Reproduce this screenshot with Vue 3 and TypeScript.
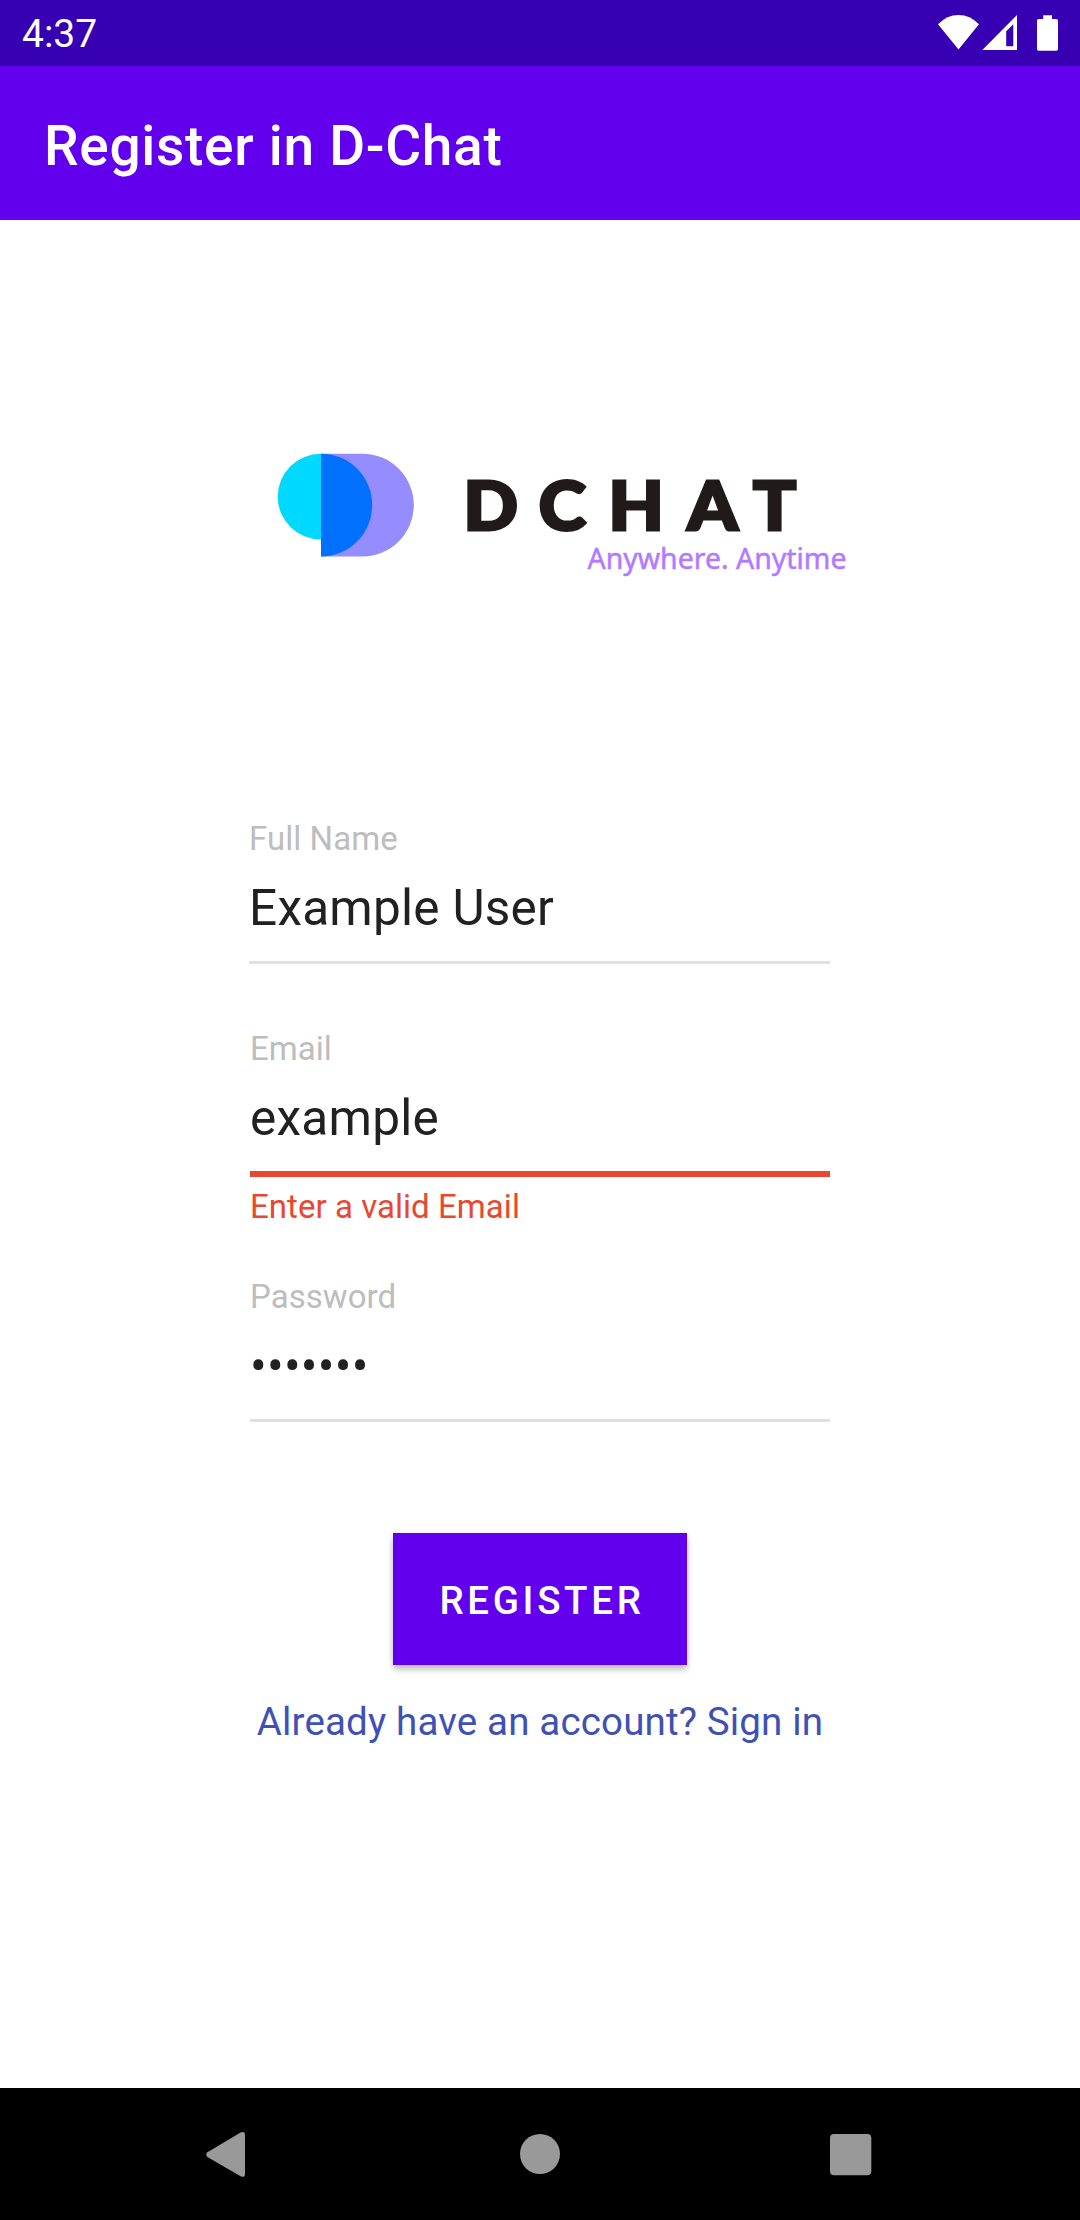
<script setup lang="ts">
import { reactive } from 'vue'

interface Field {
  id: string
  label: string
  type: string
  value: string
  error?: string
}

const fields = reactive<Field[]>([
  { id: 'name', label: 'Full Name', type: 'text', value: 'Example User' },
  { id: 'email', label: 'Email', type: 'text', value: 'example', error: 'Enter a valid Email' },
  { id: 'password', label: 'Password', type: 'password', value: 'example' },
])
</script>

<template>
  <div class="screen">
    <header class="status">
      <span class="clock">4:37</span>
      <svg class="status-icons" width="124" height="40" viewBox="936 13 124 40" fill="#fff">
        <path d="M938 24.3Q947 15 958.5 15T979 24.3L958.5 49.6Z" />
        <path fill-rule="evenodd" d="M982.3 50L1017 15V50ZM1006.2 31.3V46.2H1013.3V24.2Z" />
        <path d="M1043.2 15.2H1052V19H1056.3Q1058 19 1058 20.7V49Q1058 50.7 1056.3 50.7H1038.7Q1037 50.7 1037 49V20.7Q1037 19 1038.7 19H1043.2Z" />
      </svg>
    </header>

    <div class="appbar"><h1>Register in D-Chat</h1></div>

    <main>
      <svg class="logo" width="580" height="150" viewBox="270 440 580 150">
        <path fill="#948cff" d="M321 453.7H362.4A51.4 51.4 0 0 1 362.4 556.5H321Z" />
        <path fill="#00d9ff" d="M321 453.7A43.3 42.95 0 0 0 277.7 496.65A43.3 42.95 0 0 0 321 539.6Z" />
        <path fill="#0071ff" d="M321 453.7A51.2 51.4 0 0 1 372.2 505.1A51.2 51.4 0 0 1 321 556.5Z" />
        <text class="wordmark" transform="translate(463.5 529.5) scale(1.06 1)" x="0 71 136.9 211.3 273.1" y="0">DCHAT</text>
        <text class="tagline" x="587.5" y="569" textLength="259" lengthAdjust="spacingAndGlyphs">Anywhere. Anytime</text>
      </svg>

      <form @submit.prevent>
        <div v-for="f in fields" :key="f.id" class="field" :class="[f.id, { invalid: f.error }]">
          <label :for="f.id">{{ f.label }}</label>
          <input :id="f.id" v-model="f.value" :type="f.type" autocomplete="off" spellcheck="false" />
          <p v-if="f.error">{{ f.error }}</p>
        </div>
        <button type="submit">REGISTER</button>
        <a class="signin">Already have an account? Sign in</a>
      </form>
    </main>

    <nav>
      <svg width="1080" height="132" viewBox="0 0 1080 132" fill="#999">
        <path d="M207.4 64.2L240.6 44.5Q245 42.8 245 47V86Q245 90 240.6 88.3L207.4 68.9Q205 66.5 207.4 64.2Z" />
        <circle cx="540" cy="66" r="20" />
        <rect x="830" y="46" width="41.3" height="41.3" rx="4" />
      </svg>
    </nav>
  </div>
</template>

<style>
body {
  margin: 0;
  background: #fff;
}
</style>

<style scoped>
.screen {
  width: 1080px;
  height: 2220px;
  display: flex;
  flex-direction: column;
  overflow: hidden;
  background: #fff;
  font-family: Roboto, 'Liberation Sans', sans-serif;
}
.status {
  height: 66px;
  box-sizing: border-box;
  padding: 0 20px 0 22px;
  display: flex;
  justify-content: space-between;
  align-items: center;
  background: #3700b3;
  color: #fff;
}
.clock {
  padding-top: 2px;
  font-size: 39px;
  line-height: 69px;
}
.appbar {
  height: 154px;
  padding-left: 44px;
  background: #6200ee;
  color: #fff;
}
h1 {
  margin: 0;
  font-size: 55px;
  font-weight: 500;
  line-height: 160px;
  letter-spacing: 0.7px;
}
main {
  flex: 1;
  display: flex;
  flex-direction: column;
  align-items: center;
}
.logo {
  display: block;
  margin: 220px 0 0 40px;
  flex: none;
  overflow: visible;
}
.wordmark {
  font-family: Lato, sans-serif;
  font-weight: 900;
  font-size: 67.5px;
  fill: #211a1b;
  stroke: #211a1b;
  stroke-width: 3px;
}
.tagline {
  font-family: 'Noto Sans', sans-serif;
  font-size: 29.5px;
  fill: #b27aff;
  stroke: #b27aff;
  stroke-width: 0.5px;
}
form {
  width: 580px;
  margin-top: 229px;
  display: flex;
  flex-direction: column;
}
.field {
  display: flex;
  flex-direction: column;
  height: 145px;
  margin-bottom: 65px;
}
.field.invalid {
  height: 206px;
  margin-bottom: 42px;
}
.field.name {
  margin-left: -1px;
}
.field.password {
  margin-bottom: 111px;
}
label {
  font-size: 33px;
  line-height: 40px;
  letter-spacing: 0.05px;
  color: #bdbdbd;
}
input {
  box-sizing: border-box;
  width: 100%;
  height: 105px;
  flex: none;
  padding: 19px 0 23px;
  border: 0;
  border-bottom: 3px solid #e0e0e0;
  outline: 0;
  background: none;
  font: 49.5px/60px Roboto, 'Liberation Sans', sans-serif;
  letter-spacing: 0.25px;
  color: #212121;
}
.invalid input {
  height: 108px;
  border-bottom: 6px solid #e8482f;
}
p {
  margin: 10px 0 0;
  font-size: 33px;
  line-height: 40px;
  letter-spacing: 0.05px;
  color: #e8482f;
}
button {
  align-self: center;
  width: 294px;
  height: 132px;
  padding: 4px 0 0 4px;
  border: 0;
  background: #6200ee;
  color: #fff;
  font: 500 38.5px/60px Roboto, 'Liberation Sans', sans-serif;
  letter-spacing: 3.65px;
  box-shadow: 0 5px 6px rgba(0, 0, 0, 0.2), 0 1px 6px rgba(0, 0, 0, 0.12);
}
.signin {
  align-self: center;
  margin-top: 32px;
  font-size: 38.5px;
  line-height: 50px;
  letter-spacing: 0.16px;
  white-space: nowrap;
  color: #3f51b5;
}
nav {
  height: 132px;
  background: #000;
}
nav svg {
  display: block;
}
</style>
